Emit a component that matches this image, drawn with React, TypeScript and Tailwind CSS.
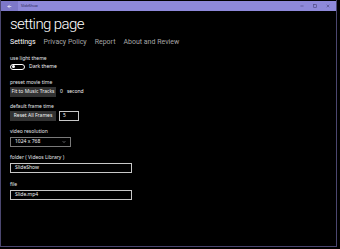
import { ArrowLeft, ChevronDown, Minus, Square, X } from "lucide-react";

const label = "text-[5px] leading-[6px] text-gray-200";

function Field({ title, value }: { title: string; value: string }) {
  return (
    <div className="flex flex-col">
      <span className={label}>{title}</span>
      <div className="mt-[3px] flex h-[10px] w-[122px] items-center border border-[#c8c8c8] px-[4px] text-[5px] text-gray-100">
        {value}
      </div>
    </div>
  );
}

export default function App() {
  return (
    <div className="h-[249px] w-[340px] overflow-hidden bg-black font-['Noto_Sans',sans-serif]">
      <div className="flex h-[247px] w-[337px] flex-col border-b border-l border-r border-[#4b4770] bg-black">
        {/* title bar */}
        <div className="mt-[1px] flex h-[10px] items-center bg-[#8e89da]">
          <div className="flex h-full w-[17px] items-center justify-center bg-[#7d78c9]">
            <ArrowLeft className="h-[5px] w-[5px] text-white" strokeWidth={3} />
          </div>
          <span className="ml-[3px] text-[3.5px] text-[#2a2650]">SlideShow</span>
          <div className="ml-auto flex items-center gap-[9px] pr-[6px] text-[#3b3766]">
            <Minus className="h-[4px] w-[4px]" strokeWidth={3} />
            <Square className="h-[4px] w-[4px]" strokeWidth={3} />
            <X className="h-[4px] w-[4px]" strokeWidth={3} />
          </div>
        </div>

        <div className="flex flex-col px-[9px]">
          <h1 className="mt-[4px] font-['Roboto',sans-serif] text-[15px] font-light leading-[18px] tracking-[-0.6px] text-white">
            setting page
          </h1>

          <div className="mt-[5px] flex gap-[8px] font-['Roboto',sans-serif] text-[7px] leading-[9px]">
            <span className="text-white">Settings</span>
            <span className="text-[#a6a6a6]">Privacy Policy</span>
            <span className="text-[#a6a6a6]">Report</span>
            <span className="text-[#a6a6a6]">About and Review</span>
          </div>

          <div className="mt-[8px] flex flex-col">
            <span className={label}>use light theme</span>
            <div className="mt-[2px] flex items-center gap-[4px]">
              <div className="flex h-[6px] w-[15px] items-center rounded-full border border-white px-[1px]">
                <div className="h-[3px] w-[3px] rounded-full bg-white" />
              </div>
              <span className="text-[5px] text-gray-100">Dark theme</span>
            </div>
          </div>

          <div className="mt-[8px] flex flex-col">
            <span className={label}>preset movie time</span>
            <div className="mt-[2px] flex items-center">
              <div className="flex h-[10px] w-[46px] items-center justify-center bg-[#333333] text-[5px] text-gray-100">
                Fit to Music Tracks
              </div>
              <span className="ml-[4px] text-[5px] text-gray-100">0</span>
              <span className="ml-[4px] text-[5px] text-gray-100">second</span>
            </div>
          </div>

          <div className="mt-[6px] flex flex-col">
            <span className={label}>default frame time</span>
            <div className="mt-[2px] flex items-center">
              <div className="flex h-[10px] w-[46px] items-center justify-center bg-[#333333] text-[5px] text-gray-100">
                Reset All Frames
              </div>
              <div className="ml-[3px] flex h-[10px] w-[20px] items-center border border-[#c8c8c8] px-[3px] text-[5px] text-gray-100">
                5
              </div>
            </div>
          </div>

          <div className="mt-[7px] flex flex-col">
            <span className={label}>video resolution</span>
            <div className="mt-[3px] flex h-[10px] w-[61px] items-center justify-between border border-[#7a7a7a] px-[4px] text-[5px] text-gray-100">
              1024 x 768
              <ChevronDown className="h-[4px] w-[4px] text-gray-300" strokeWidth={3} />
            </div>
          </div>

          <div className="mt-[7px] flex flex-col gap-[8px]">
            <Field title="folder ( Videos Library )" value="SlideShow" />
            <Field title="file" value="Slide.mp4" />
          </div>
        </div>
      </div>
    </div>
  );
}
